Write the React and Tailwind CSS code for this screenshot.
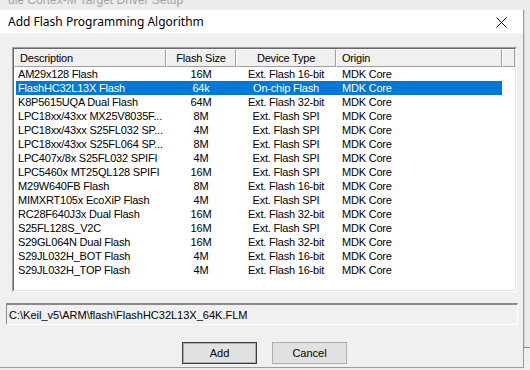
const rows = [
  ['AM29x128 Flash', '16M', 'Ext. Flash 16-bit', 'MDK Core'],
  ['FlashHC32L13X Flash', '64k', 'On-chip Flash', 'MDK Core'],
  ['K8P5615UQA Dual Flash', '64M', 'Ext. Flash 32-bit', 'MDK Core'],
  ['LPC18xx/43xx MX25V8035F...', '8M', 'Ext. Flash SPI', 'MDK Core'],
  ['LPC18xx/43xx S25FL032 SP...', '4M', 'Ext. Flash SPI', 'MDK Core'],
  ['LPC18xx/43xx S25FL064 SP...', '8M', 'Ext. Flash SPI', 'MDK Core'],
  ['LPC407x/8x S25FL032 SPIFI', '4M', 'Ext. Flash SPI', 'MDK Core'],
  ['LPC5460x MT25QL128 SPIFI', '16M', 'Ext. Flash SPI', 'MDK Core'],
  ['M29W640FB Flash', '8M', 'Ext. Flash 16-bit', 'MDK Core'],
  ['MIMXRT105x EcoXiP Flash', '4M', 'Ext. Flash SPI', 'MDK Core'],
  ['RC28F640J3x Dual Flash', '16M', 'Ext. Flash 32-bit', 'MDK Core'],
  ['S25FL128S_V2C', '16M', 'Ext. Flash SPI', 'MDK Core'],
  ['S29GL064N Dual Flash', '16M', 'Ext. Flash 32-bit', 'MDK Core'],
  ['S29JL032H_BOT Flash', '4M', 'Ext. Flash 16-bit', 'MDK Core'],
  ['S29JL032H_TOP Flash', '4M', 'Ext. Flash 16-bit', 'MDK Core'],
]

const SELECTED = 1

function HeaderCell({ w, align = 'left', children }) {
  return (
    <div
      className={`flex h-full items-center border-t border-l border-t-white border-l-white border-r border-b border-r-[#a0a0a0] border-b-[#a0a0a0] ${w} ${
        align === 'center' ? 'justify-center' : 'pl-[5px]'
      }`}
    >
      {children}
    </div>
  )
}

function Button({ children, isDefault }) {
  return (
    <div
      className={`flex h-[22px] w-[75px] items-center justify-center bg-[#e1e1e1] ${
        isDefault ? 'border border-[#3c3c3c] outline outline-1 -outline-offset-2 outline-[#adadad]' : 'border border-[#adadad]'
      }`}
    >
      {children}
    </div>
  )
}

export default function App() {
  return (
    <div className="flex h-[370px] w-[530px] flex-col overflow-hidden bg-[#ececec] text-[11px] leading-[14px] text-black [font-family:'Liberation_Sans',Arial,sans-serif]">
      {/* window behind the dialog */}
      <div className="h-[10px] shrink-0 overflow-hidden pl-[8px] text-[#a3a3a3]">
        <div className="-mt-[7px] text-[12px] leading-[14px]">ule Cortex-M Target Driver Setup</div>
      </div>

      <div className="flex min-h-0 flex-1">
        <div className="flex h-[358px] w-[524px] shrink-0 flex-col border-r border-b border-[#9a9a9a] bg-[#f0f0f0]">
          {/* title bar */}
          <div className="flex h-[23px] shrink-0 items-center justify-between bg-white pl-[8px] pr-[16px]">
            <span className="text-[12px] [font-family:'Noto_Sans',sans-serif]">Add Flash Programming Algorithm</span>
            <svg width="11" height="11" viewBox="0 0 11 11" className="mt-[1px]">
              <path d="M0.5 0.5 L10.5 10.5 M10.5 0.5 L0.5 10.5" stroke="#111" strokeWidth="1" />
            </svg>
          </div>

          {/* list */}
          <div className="ml-[12px] mt-[14px] h-[245px] w-[505px] border-t border-l border-t-[#a0a0a0] border-l-[#a0a0a0] border-r border-b border-r-white border-b-white tracking-[-0.2px]">
            <div className="h-full w-full border-t border-l border-t-[#696969] border-l-[#696969] border-r border-b border-r-[#e3e3e3] border-b-[#e3e3e3] bg-white">
              <div className="flex h-[18px] bg-[#f0f0f0]">
                <HeaderCell w="w-[152px]">Description</HeaderCell>
                <HeaderCell w="w-[70px]" align="center">Flash Size</HeaderCell>
                <HeaderCell w="w-[100px]" align="center">Device Type</HeaderCell>
                <HeaderCell w="w-[166px]">Origin</HeaderCell>
                <HeaderCell w="flex-1"></HeaderCell>
              </div>
              <div className="flex flex-col">
                {rows.map((r, i) => (
                  <div
                    key={r[0]}
                    className={`ml-[2px] flex h-[14px] w-[486px] items-center whitespace-nowrap ${
                      i === SELECTED ? 'bg-[#0078d7] text-white' : ''
                    }`}
                  >
                    <div className="w-[150px] pl-[2px]">{r[0]}</div>
                    <div className="w-[70px] text-center">{r[1]}</div>
                    <div className="w-[100px] text-center">{r[2]}</div>
                    <div className="w-[166px] pl-[6px]">{r[3]}</div>
                  </div>
                ))}
              </div>
            </div>
          </div>

          {/* path */}
          <div className="ml-[6px] mt-[11px] flex h-[22px] w-[512px] items-center border-t-2 border-l border-t-[#8a8a8a] border-l-[#8a8a8a] border-r border-b border-r-white border-b-white pl-[2px]">
            C:\Keil_v5\ARM\flash\FlashHC32L13X_64K.FLM
          </div>

          {/* buttons */}
          <div className="mt-[17px] flex gap-[15px] pl-[182px]">
            <Button isDefault>Add</Button>
            <Button>Cancel</Button>
          </div>
        </div>

        <div className="flex flex-1 flex-col">
          <div className="h-[337px] border-l border-[#d8d8d8]"></div>
          <div className="flex-1 border-t border-[#8a8a8a] bg-[#f0f0f0]"></div>
        </div>
      </div>
    </div>
  )
}
